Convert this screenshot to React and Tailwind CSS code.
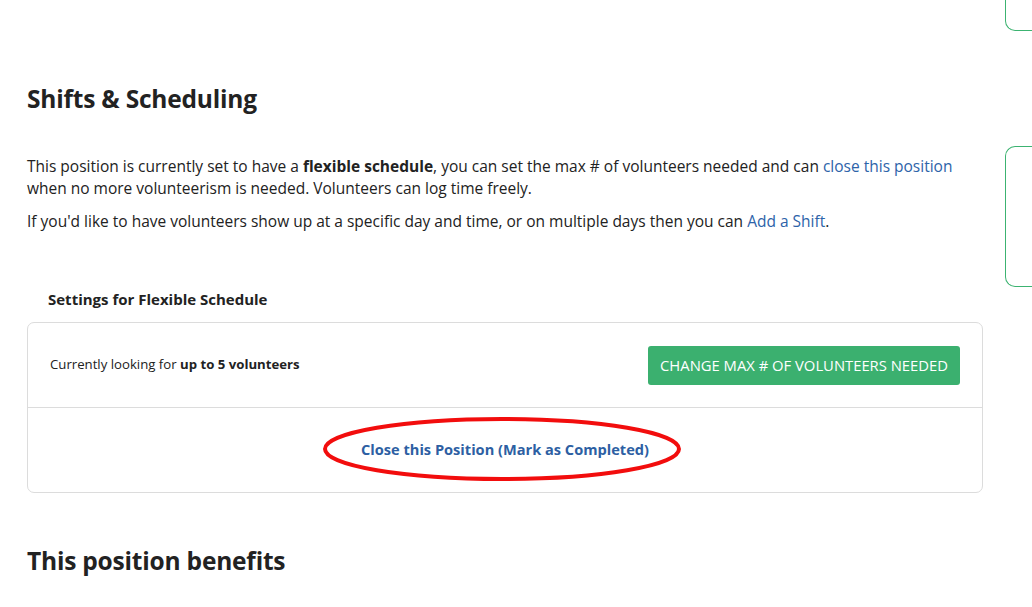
import React from 'react';

export default function App() {
  return (
    <div className="w-[1032px] h-[607px] overflow-hidden bg-white flex text-[#222] font-['Open_Sans',sans-serif]">
      {/* Main column */}
      <main className="w-[956px] ml-[27px] shrink-0 pt-[81px]">
        <h2 className="text-[24.5px] leading-[36px] font-bold tracking-[-0.2px]">Shifts &amp; Scheduling</h2>

        <div className="mt-[38px] text-[15.5px] leading-[22px]">
          <p>
            This position is currently set to have a <strong>flexible schedule</strong>, you can set the max # of volunteers needed and can{' '}
            <a className="text-[#2d63a9]">close this position</a>
            <br />
            when no more volunteerism is needed. Volunteers can log time freely.
          </p>
          <p className="mt-[11px]">
            If you'd like to have volunteers show up at a specific day and time, or on multiple days then you can{' '}
            <a className="text-[#2d63a9]">Add a Shift</a>.
          </p>
        </div>

        <h4 className="mt-[56px] ml-[21px] text-[15px] leading-[22px] font-bold">Settings for Flexible Schedule</h4>

        <div className="mt-[12px] border border-[#dcdcdc] rounded-[7px]">
          <div className="h-[85px] flex items-center justify-between pl-[22px] pr-[22px] border-b border-[#dcdcdc]">
            <span className="text-[13.2px]">
              Currently looking for <strong>up to 5 volunteers</strong>
            </span>
            <button className="h-[39px] px-[12px] rounded-[3px] bg-[#3bb06f] text-white text-[14.8px] uppercase">
              Change max # of volunteers needed
            </button>
          </div>
          <div className="h-[84px] flex items-center justify-center relative">
            <a className="text-[#2d5fa3] font-bold text-[14.6px]">Close this Position (Mark as Completed)</a>
            <svg className="absolute left-[294px] top-[8px]" width="360" height="66" viewBox="0 0 360 66">
              <ellipse cx="180" cy="33" rx="177" ry="30" fill="none" stroke="#f20d0d" strokeWidth="4" />
            </svg>
          </div>
        </div>

        <h2 className="mt-[50px] text-[24.5px] leading-[36px] font-bold tracking-[-0.2px]">This position benefits</h2>
      </main>

      {/* Sidebar cards, cut off at the right edge */}
      <aside className="ml-[22px] w-[200px] shrink-0 flex flex-col">
        <div className="h-[31px] border-l border-b border-[#3cb371] rounded-bl-[10px]" />
        <div className="mt-[115px] h-[141px] border-l border-t border-b border-[#3cb371] rounded-l-[10px]" />
      </aside>
    </div>
  );
}
